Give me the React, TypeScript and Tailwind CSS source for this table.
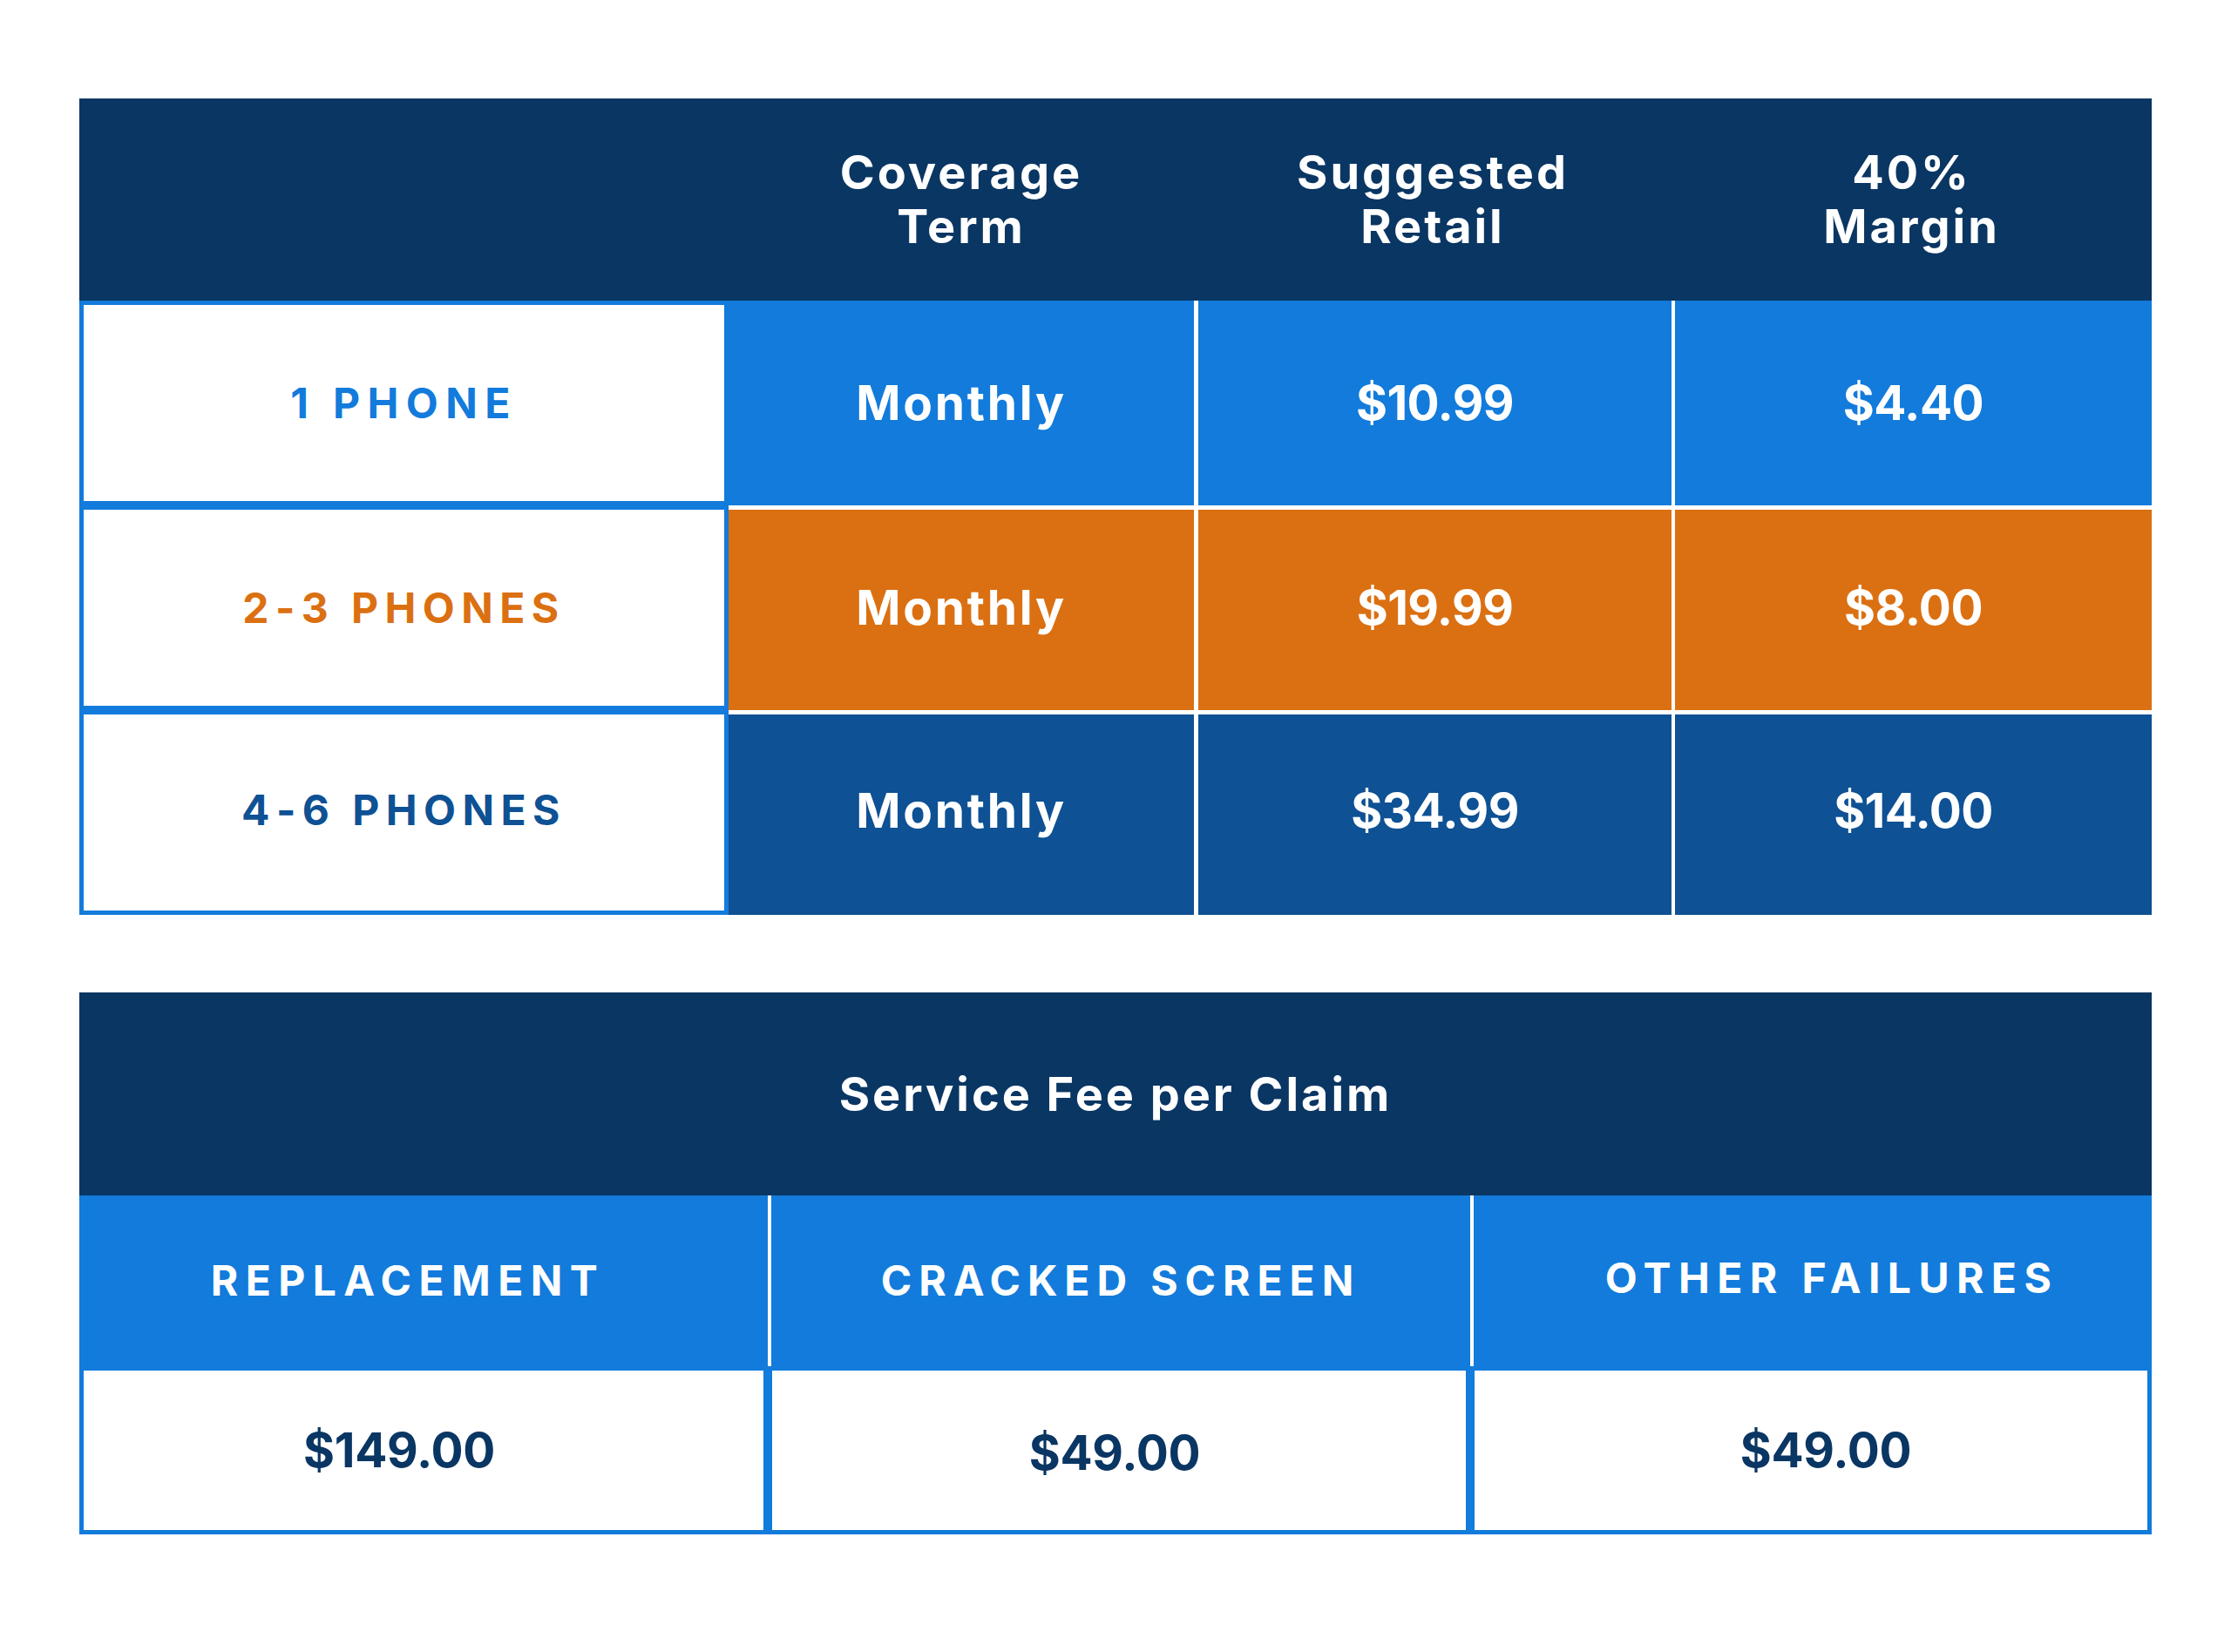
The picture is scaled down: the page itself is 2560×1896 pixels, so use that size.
const rows = [
  {
    label: "1 PHONE",
    labelColor: "text-[#127bdb]",
    labelTrack: "tracking-[0.175em]",
    bg: "bg-[#127bdb]",
    shift: "",
    labelShift: "",
    term: "Monthly",
    retail: "$10.99",
    margin: "$4.40",
  },
  {
    label: "2-3 PHONES",
    labelColor: "text-[#db7012]",
    labelTrack: "tracking-[0.155em]",
    bg: "bg-[#db7012]",
    shift: "border-t-[5px] pb-[6px]",
    labelShift: "",
    term: "Monthly",
    retail: "$19.99",
    margin: "$8.00",
  },
  {
    label: "4-6 PHONES",
    labelColor: "text-[#0e5194]",
    labelTrack: "tracking-[0.155em]",
    bg: "bg-[#0e5194]",
    shift: "border-t-[5px] pb-[10px]",
    labelShift: "pb-[5px]",
    term: "Monthly",
    retail: "$34.99",
    margin: "$14.00",
  },
];

const cellText = "flex items-center justify-center border-white text-[55px] font-bold";
const headText =
  "flex items-center justify-center text-center text-[54px] leading-[62px] font-bold tracking-[0.055em]";

function PlanTable() {
  return (
    <div className="flex flex-col">
      {/* header */}
      <div className="flex h-[232px] bg-[#0a3663]">
        <div className="w-[745px]" />
        <div className={`w-[534px] ${headText}`}>
          Coverage
          <br />
          Term
        </div>
        <div className={`w-[548px] ${headText}`}>
          Suggested
          <br />
          Retail
        </div>
        <div className={`flex-1 ${headText}`}>
          40%
          <br />
          Margin
        </div>
      </div>

      {rows.map((r) => (
        <div key={r.label} className="flex h-[235px]">
          <div
            className={`flex w-[745px] items-center justify-center border-[5px] border-[#127bdb] bg-white text-[48px] font-bold ${r.labelTrack} ${r.labelColor} ${r.labelShift}`}
          >
            {r.label}
          </div>
          <div className={`w-[534px] tracking-[0.05em] ${r.bg} ${r.shift} ${cellText}`}>{r.term}</div>
          <div className={`w-[548px] border-l-[5px] tracking-[-0.01em] ${r.bg} ${r.shift} ${cellText}`}>
            {r.retail}
          </div>
          <div className={`flex-1 border-l-[4px] tracking-[-0.01em] ${r.bg} ${r.shift} ${cellText}`}>
            {r.margin}
          </div>
        </div>
      ))}
    </div>
  );
}

function FeeTable() {
  return (
    <div className="mt-[89px] flex flex-col">
      <div className="flex h-[233px] items-center justify-center bg-[#0a3663] text-[54px] font-bold tracking-[0.055em]">
        Service Fee per Claim
      </div>

      <div className="flex h-[196px] bg-[#127bdb] text-[48px] font-bold tracking-[0.175em]">
        <div className="flex w-[790px] items-center justify-center pr-[36px]">REPLACEMENT</div>
        <div className="flex w-[806px] items-center justify-center border-l-[4px] border-white tracking-[0.165em]">
          CRACKED SCREEN
        </div>
        <div className="flex flex-1 items-center justify-center border-l-[4px] border-white pb-[6px] pl-[44px]">
          OTHER FAILURES
        </div>
      </div>

      <div className="flex h-[193px] text-[55px] font-bold tracking-[-0.005em] text-[#0a3663]">
        <div className="flex w-[790px] items-center justify-center border-[5px] border-[#127bdb] bg-white pr-[56px]">
          $149.00
        </div>
        <div className="flex w-[806px] items-center justify-center border-[5px] border-[#127bdb] bg-white pt-[6px] pr-[10px]">
          $49.00
        </div>
        <div className="flex flex-1 items-center justify-center border-[5px] border-[#127bdb] bg-white pl-[34px]">
          $49.00
        </div>
      </div>
    </div>
  );
}

export default function App() {
  return (
    <div className="min-h-[1896px] w-[2560px] bg-white px-[91px] pt-[113px] font-['Inter','Liberation_Sans',sans-serif] text-white">
      <PlanTable />
      <FeeTable />
    </div>
  );
}
